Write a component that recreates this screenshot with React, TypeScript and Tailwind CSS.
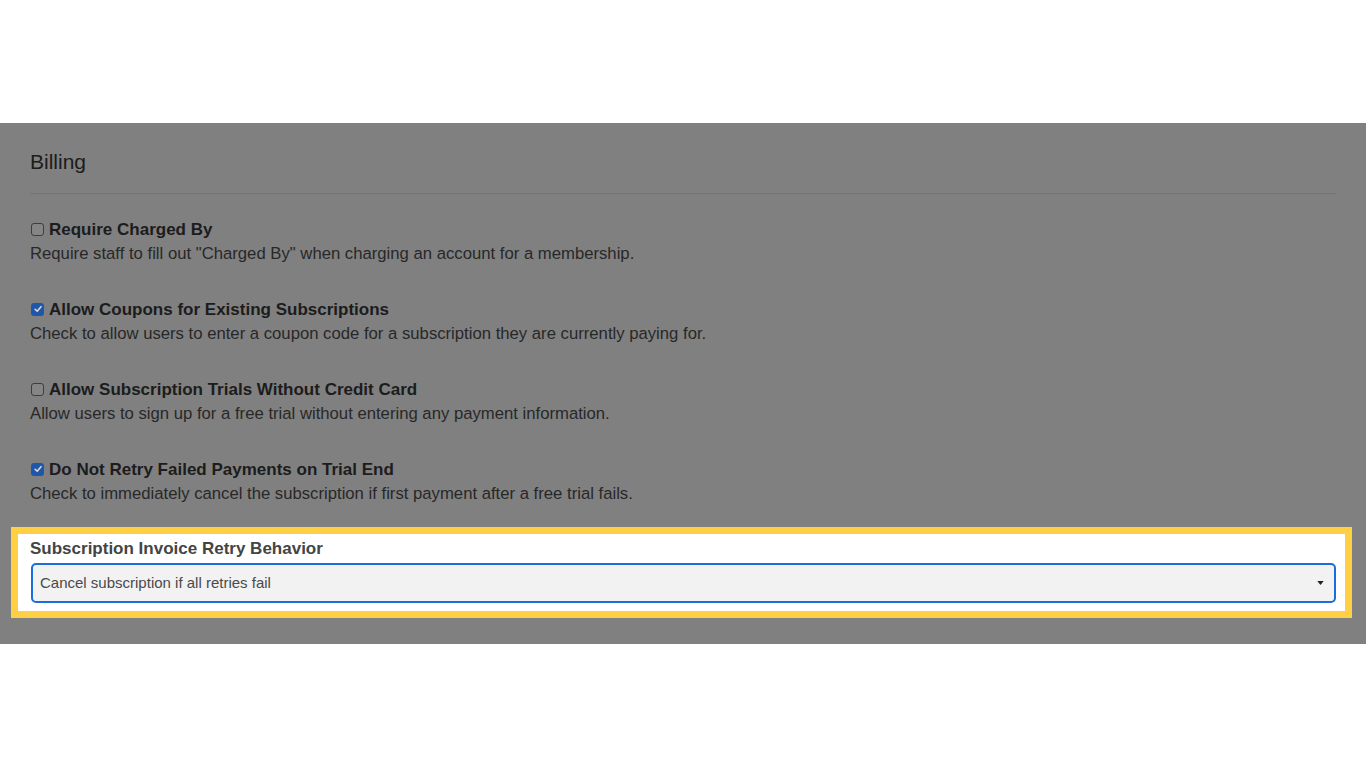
import React from "react";

const settings = [
  {
    title: "Require Charged By",
    desc: 'Require staff to fill out "Charged By" when charging an account for a membership.',
    checked: false,
  },
  {
    title: "Allow Coupons for Existing Subscriptions",
    desc: "Check to allow users to enter a coupon code for a subscription they are currently paying for.",
    checked: true,
  },
  {
    title: "Allow Subscription Trials Without Credit Card",
    desc: "Allow users to sign up for a free trial without entering any payment information.",
    checked: false,
  },
  {
    title: "Do Not Retry Failed Payments on Trial End",
    desc: "Check to immediately cancel the subscription if first payment after a free trial fails.",
    checked: true,
  },
];

function Box({ checked }: { checked: boolean }) {
  if (checked) {
    return (
      <span className="flex size-[13px] items-center justify-center rounded-[3px] bg-[#1f57a8]">
        <svg viewBox="0 0 12 12" className="size-[10px]" fill="none">
          <path d="M2.5 6.3 L5 8.6 L9.6 3.2" stroke="#d9d9d9" strokeWidth="1.9" strokeLinecap="round" strokeLinejoin="round" />
        </svg>
      </span>
    );
  }
  return <span className="block size-[13px] rounded-[3px] border border-[#3d3d3d] bg-[#858585]" />;
}

export default function App() {
  return (
    <div className="min-h-[768px] bg-white pt-[123px] font-['Liberation_Sans',Arial,sans-serif]">
      <div className="bg-[#808080] px-[30px] pt-[25px] pb-[26px]">
        <h2 className="text-[21px] leading-[28px] text-[#1c1c1c]">Billing</h2>
        <div className="mt-[17px] border-t border-[#747474]" />
        <div className="mt-[24px] flex flex-col gap-[32px]">
          {settings.map((s) => (
            <div key={s.title}>
              <div className="flex h-6 items-center gap-[5px] pl-px">
                <span className="-mt-[2px]">
                  <Box checked={s.checked} />
                </span>
                <span className="text-[17px] font-bold text-[#1c1c1c]">{s.title}</span>
              </div>
              <p className="text-[16.7px] leading-6 text-[#282828]">{s.desc}</p>
            </div>
          ))}
        </div>
        <div className="mt-[21px] mr-[-16px] ml-[-19px] border-[7px] border-[#ffd044] bg-white pt-[5px] pr-[9px] pb-[8px] pl-[12px]">
          <label className="block text-[17px] leading-5 font-bold text-[#444]">
            Subscription Invoice Retry Behavior
          </label>
          <div className="mt-[4px] ml-px flex h-[40px] items-center justify-between rounded-[5px] border-2 border-[#1a6ddb] bg-[#f2f2f2] pr-[10px] pl-[7px]">
            <span className="text-[15px] text-[#4a4a4a]">Cancel subscription if all retries fail</span>
            <svg viewBox="0 0 8 5" className="h-[4px] w-[7px]">
              <path d="M0 0 H8 L4 5 Z" fill="#222" />
            </svg>
          </div>
        </div>
      </div>
    </div>
  );
}
